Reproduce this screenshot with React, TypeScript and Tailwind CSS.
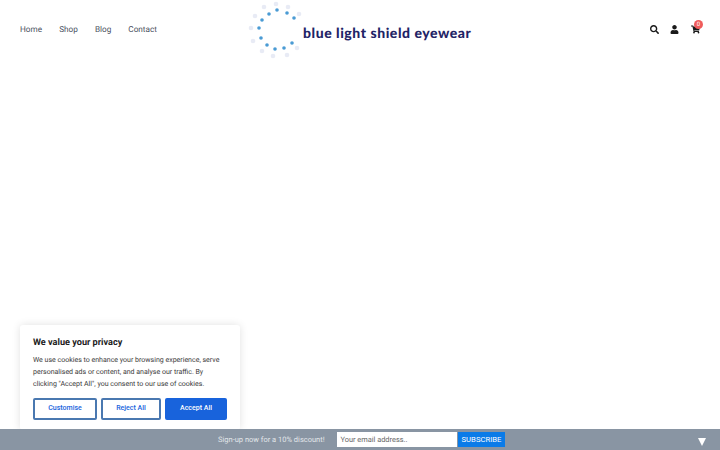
import { FaSearch, FaUser, FaShoppingCart } from "react-icons/fa";

const inner: [number, number][] = [[24,14],[32,10],[42,13],[49,18],[17,20],[14,28],[16,38],[22,45],[30,49],[39,48],[47,43]];
const outer: [number, number][] = [[31,4],[19,7],[43,7],[54,14],[10,16],[6,28],[8,41],[17,51],[28,56],[42,55],[52,48]];

function Logo() {
  return (
    <div className="flex items-center w-[222px] h-[60px] ml-[89px]">
      <svg width="60" height="60" viewBox="0 0 60 60" className="shrink-0">
        {outer.map(([x, y], i) => <circle key={i} cx={x} cy={y} r="2.3" fill="#e8ebf5" />)}
        {inner.map(([x, y], i) => <circle key={i} cx={x} cy={y} r="1.8" fill="#4a9bd4" />)}
      </svg>
      <span className="ml-[-2px] mt-[4px] whitespace-nowrap font-['Lato',sans-serif] font-black text-[14px] tracking-[0.55px] text-[#1f2466]">blue light shield eyewear</span>
    </div>
  );
}

export default function App() {
  return (
    <div className="relative h-[450px] w-[720px] overflow-hidden bg-white font-['Roboto',sans-serif] [text-rendering:geometricPrecision]">
      <header className="flex items-center h-[60px] pl-5 pr-[20px]">
        <nav className="flex w-[136px] gap-[17.1px] text-[8.2px] text-[#4a5060] whitespace-nowrap">
          <span>Home</span><span>Shop</span><span>Blog</span><span>Contact</span>
        </nav>
        <Logo />
        <div className="ml-auto flex items-center gap-[11px] mb-[1px] text-[#1a1a1a]">
          <FaSearch className="w-[9px] h-[9px]" />
          <FaUser className="w-[9px] h-[9px]" />
          <div className="relative ml-[1px]">
            <FaShoppingCart className="w-[9px] h-[9px]" />
            <span className="absolute -top-[5px] left-[3px] flex h-[9px] w-[9px] items-center justify-center rounded-full bg-[#ef5b5b] text-[6px] text-white">0</span>
          </div>
        </div>
      </header>

      <section className="absolute left-5 top-[325px] w-[220px] h-[105px] rounded-[3px] bg-white p-[13px] shadow-[0_0_8px_rgba(0,0,0,0.12)]">
        <h2 className="text-[9.14px] leading-[6px] font-bold text-[#212121] mt-[1.5px]">We value your privacy</h2>
        <p className="mt-[8.5px] text-[7.03px] leading-[12px] text-[#3a3a3a] whitespace-nowrap">
          We use cookies to enhance your browsing experience, serve<br />
          personalised ads or content, and analyse our traffic. By<br />
          clicking "Accept All", you consent to our use of cookies.
        </p>
        <div className="mt-[7.5px] flex gap-[4px] text-[7.03px] font-medium">
          <button className="w-[64px] h-[22px] rounded-[2px] border-2 border-[#4a78b0] text-[#1863dc]">Customise</button>
          <button className="w-[60px] h-[22px] rounded-[2px] border-2 border-[#4a78b0] text-[#1863dc]">Reject All</button>
          <button className="w-[62px] h-[22px] rounded-[2px] border-2 border-[#1863dc] bg-[#1863dc] text-white">Accept All</button>
        </div>
      </section>

      <footer className="absolute bottom-0 left-0 right-0 flex h-[21px] items-center bg-[#8995a3] pl-[218px]">
        <span className="w-[108px] text-[7.5px] text-[#e2e6ea] whitespace-nowrap">Sign-up now for a 10% discount!</span>
        <div className="ml-[11px] flex h-[15px] w-[120px] items-center bg-white pl-[3.5px] text-[7.4px] text-[#666]">Your email address..</div>
        <button className="ml-[1px] h-[15px] w-[47px] bg-[#0a7be8] text-[7.7px] text-white">SUBSCRIBE</button>
        <span className="ml-auto mr-[14px] mt-[4px] h-0 w-0 border-x-[4px] border-t-[8px] border-x-transparent border-t-white" />
      </footer>
    </div>
  );
}
